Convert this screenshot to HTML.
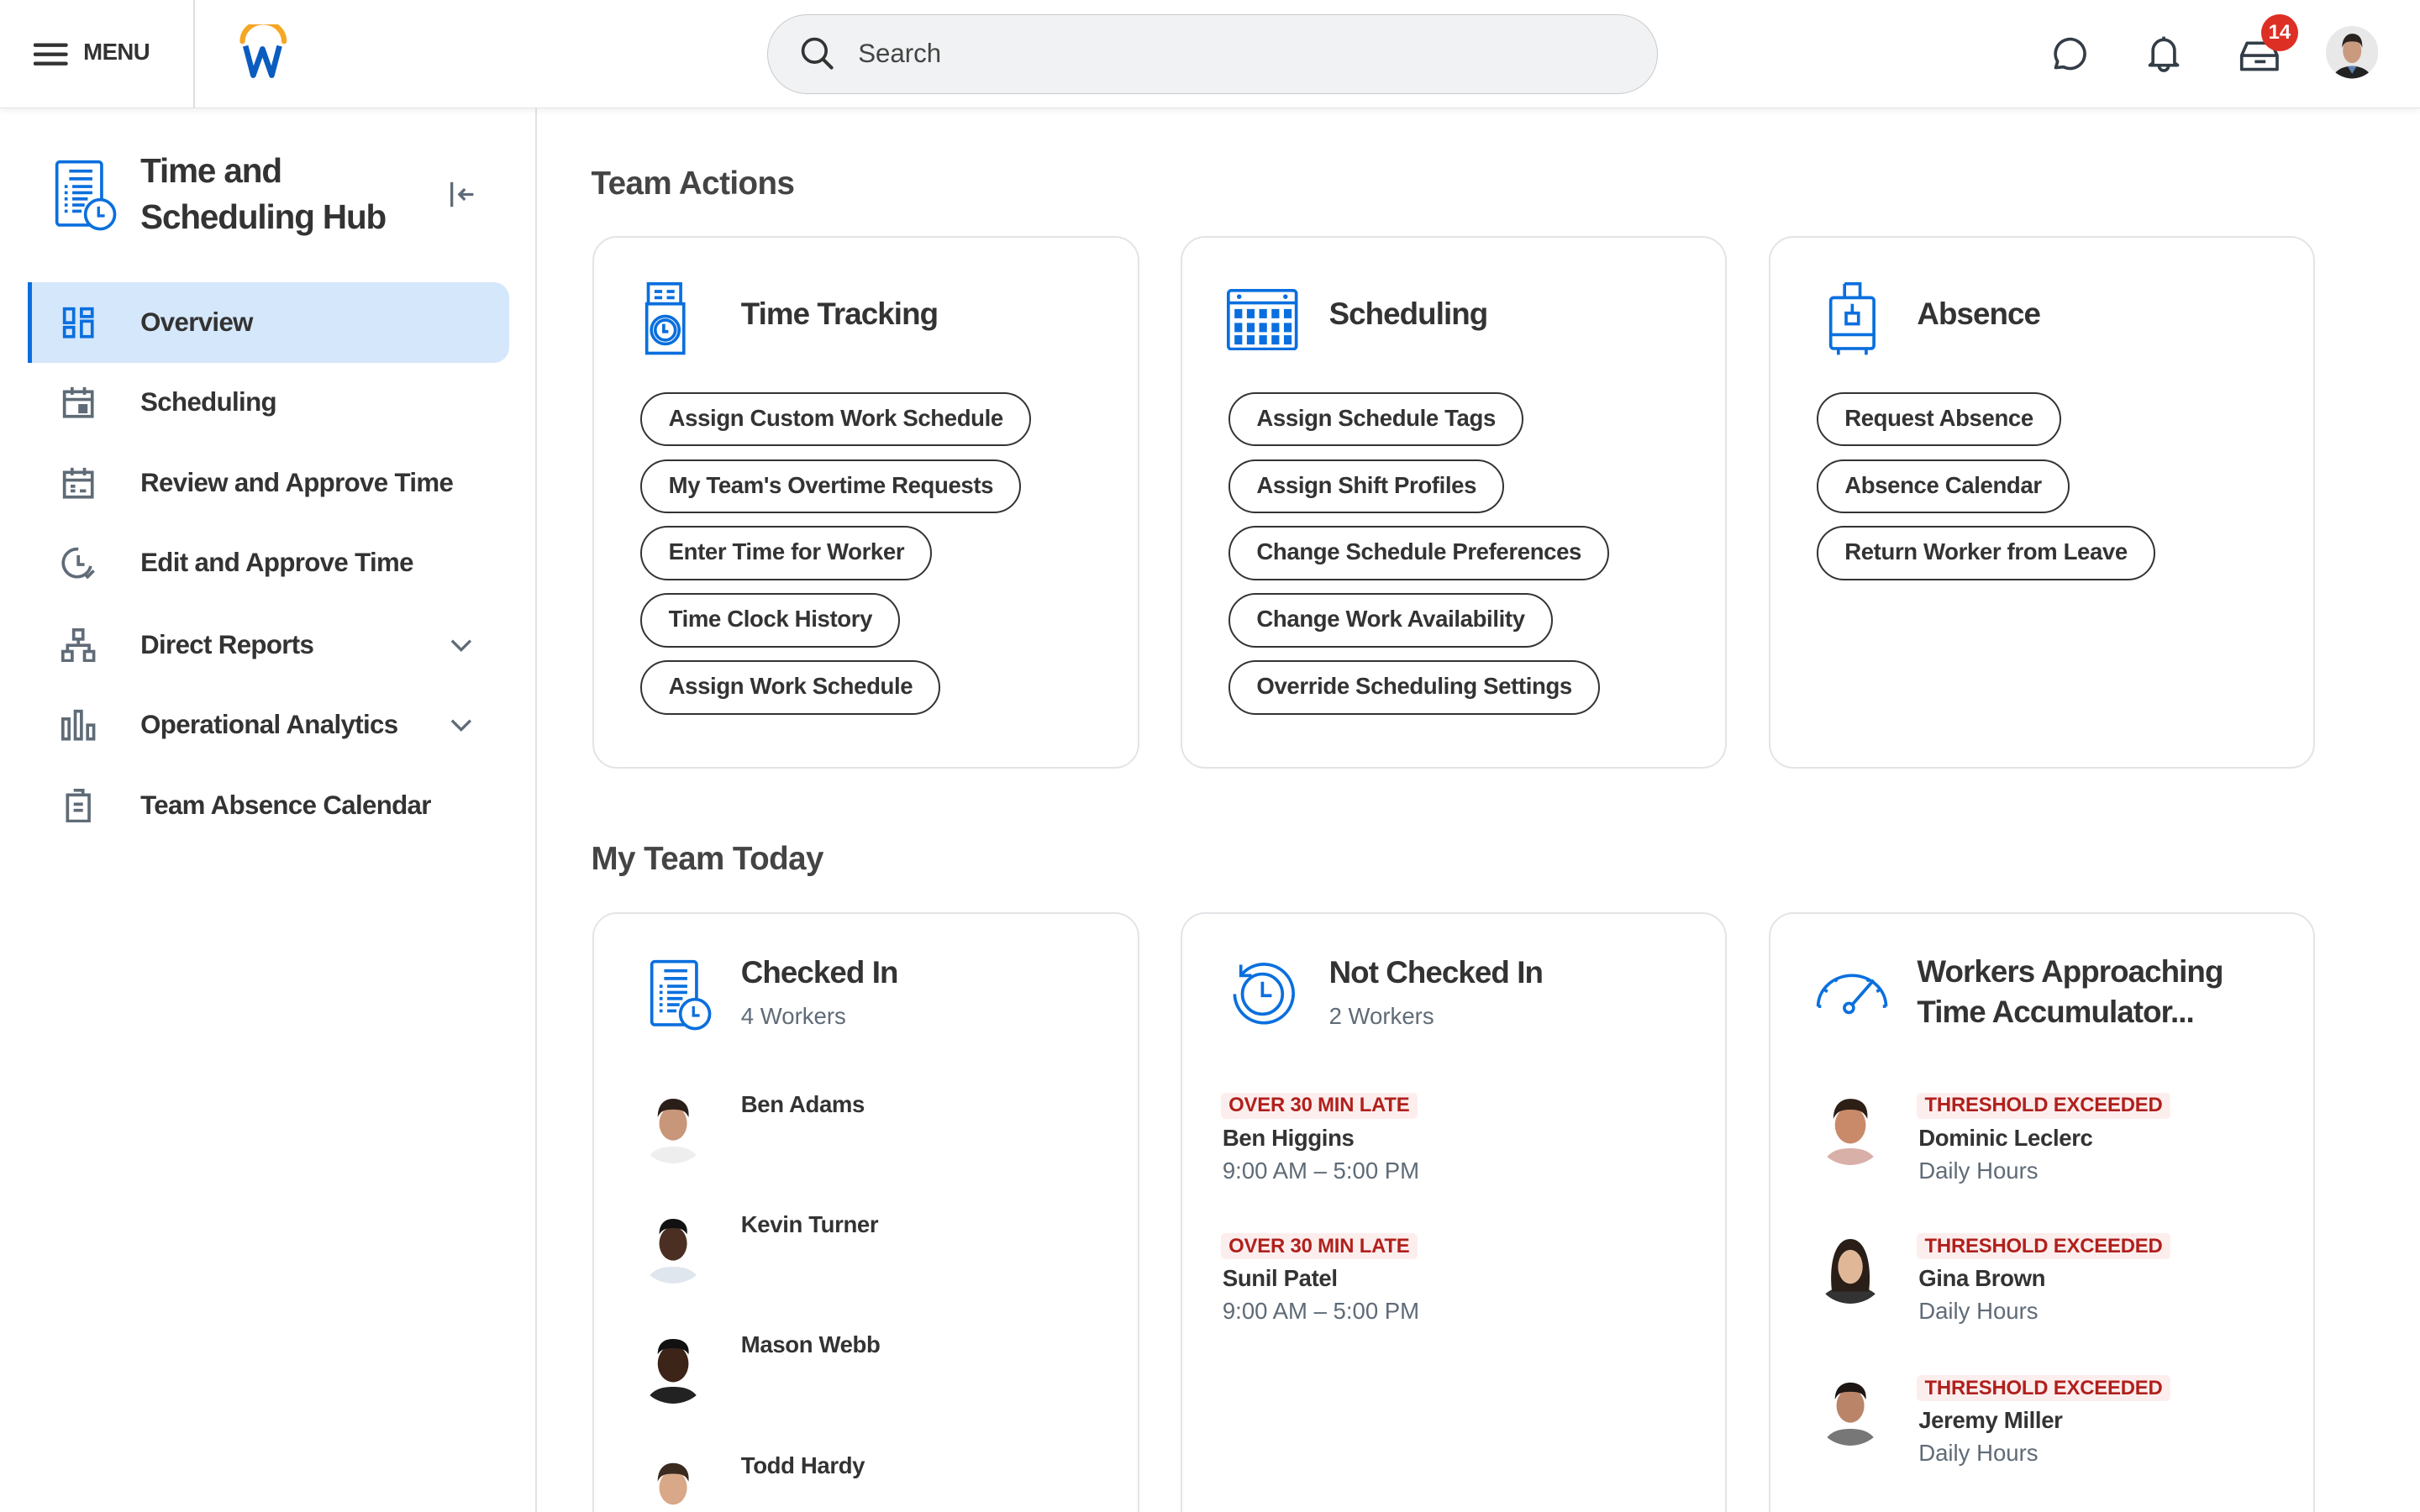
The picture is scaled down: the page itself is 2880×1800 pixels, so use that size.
<!DOCTYPE html>
<html><head><meta charset="utf-8"><style>
*{box-sizing:border-box;margin:0;padding:0}
html,body{width:2880px;height:1800px;overflow:hidden;background:#fff}
#root{zoom:1.836735;width:1568px;height:980px;position:relative;font-family:"Liberation Sans",sans-serif;color:#333;overflow:hidden}
.a{position:absolute}
.hdr{left:0;top:0;width:1568px;height:70px;border-bottom:1px solid #e3e4e6;box-shadow:0 2px 4px rgba(0,0,0,.06);background:#fff;z-index:2}
.side{left:0;top:70px;width:348px;height:910px;border-right:1.5px solid #e2e3e6}
.nav{left:18px;width:312px;height:52px;display:flex;align-items:center;font-size:17px;font-weight:bold;color:#333;letter-spacing:-.35px}
.nav svg{position:absolute;left:22px}
.nav span{position:absolute;left:73px}
.h2{font-size:21px;font-weight:bold;color:#444;letter-spacing:-.3px}
.card{border:1.5px solid #e2e4e7;border-radius:16px;background:#fff}
.ct{font-size:20px;font-weight:bold;color:#333;letter-spacing:-.5px}
.pill{position:absolute;left:30px;height:35px;border:1.6px solid #333;border-radius:18px;padding:0 17px;font-size:15px;font-weight:bold;line-height:32px;white-space:nowrap;color:#333;letter-spacing:-.2px}
.tag{position:absolute;background:#fdeeee;color:#b0201c;font-size:13px;font-weight:bold;padding:1px 5px;border-radius:3px;letter-spacing:-.1px}
.nm{position:absolute;font-size:15px;font-weight:bold;color:#333;letter-spacing:-.2px}
.sub{position:absolute;font-size:15px;color:#5f6b77}
.av{position:absolute;width:48px;height:48px;border-radius:50%;overflow:hidden}
</style></head><body><div id="root">

<div class="a hdr">
 <svg class="a" style="left:22px;top:27px" width="22" height="16" viewBox="0 0 22 16"><path d="M1 2h20M1 8h20M1 14h20" stroke="#333" stroke-width="2.4" stroke-linecap="round"/></svg>
 <div class="a" style="left:54px;top:25px;font-size:15px;font-weight:bold;color:#333;letter-spacing:-.3px">MENU</div>
 <div class="a" style="left:125px;top:0;width:1.5px;height:70px;background:#ddd"></div>
 <svg class="a" style="left:154px;top:16px" width="34" height="36" viewBox="0 0 34 36"><path d="M3 11A13 12 0 0 1 30 11" fill="none" stroke="#f6a623" stroke-width="3.4" stroke-linecap="round"/><path d="M5 14l5 19 6-17 6 17 5-19" fill="none" stroke="#0b5cbf" stroke-width="3.6" stroke-linejoin="round"/></svg>
 <div class="a" style="left:497px;top:9px;width:577px;height:52px;border:1px solid #c7cacd;border-radius:26px;background:#f1f2f3"></div>
 <svg class="a" style="left:518px;top:23px" width="24" height="24" viewBox="0 0 24 24"><circle cx="10" cy="10" r="7.5" fill="none" stroke="#333" stroke-width="2"/><path d="M16 16l5 5" stroke="#333" stroke-width="2.2" stroke-linecap="round"/></svg>
 <div class="a" style="left:556px;top:25px;font-size:17px;color:#444">Search</div>
 <svg class="a" style="left:1329px;top:23px" width="24" height="24" viewBox="0 0 24 24"><path d="M3 21l1.2-4A9.5 9.5 0 1 1 8 20.5z" fill="none" stroke="#333d47" stroke-width="2" stroke-linejoin="round"/></svg>
 <svg class="a" style="left:1390px;top:22px" width="24" height="26" viewBox="0 0 24 26"><path d="M12 2v1.5M5 19V11a7 7 0 0 1 14 0v8l2 1.5H3z" fill="none" stroke="#333d47" stroke-width="2" stroke-linejoin="round"/><path d="M9 21a3 3 0 0 0 6 0" fill="none" stroke="#333d47" stroke-width="2"/></svg>
 <svg class="a" style="left:1451px;top:24px" width="26" height="24" viewBox="0 0 26 24"><path d="M1.5 12L5 4h16l3.5 8v9h-23z M1.5 12h23" fill="none" stroke="#333d47" stroke-width="2" stroke-linejoin="round"/><path d="M10 16h7" stroke="#333d47" stroke-width="2"/></svg>
 <div class="a" style="left:1465px;top:9px;width:24px;height:24px;border-radius:50%;background:#de2f24;color:#fff;font-size:13px;font-weight:bold;text-align:center;line-height:24px">14</div>
 <svg class="a" style="left:1507px;top:17px" width="34" height="34" viewBox="0 0 34 34"><clipPath id="c0"><circle cx="17" cy="17" r="17"/></clipPath><g clip-path="url(#c0)"><rect width="34" height="34" fill="#e8e8e8"/><path d="M4 34c2-6 8-8 13-8s11 2 13 8z" fill="#222"/><path d="M14 26l3 5 3-5z" fill="#5a7fb0"/><ellipse cx="17" cy="16" rx="6" ry="8" fill="#c99a7e"/><path d="M10.5 14c0-6 3-9 6.5-9s7 2 6.5 9c-1-3-2-4-6.5-4s-5 1-6.5 4z" fill="#2a2320"/></g></svg>
</div>

<div class="a side">
 <svg class="a" style="left:35px;top:33px" width="42" height="50" viewBox="0 0 42 50"><rect x="2" y="2" width="29" height="41" rx="2" fill="none" stroke="#0a6fde" stroke-width="2"/><path d="M10 8h15M10 13h15M7 18h2M12 18h13M7 22h2M12 22h13M7 26h2M12 26h10M7 30h2M12 30h8M7 34h2M12 34h6" stroke="#0a6fde" stroke-width="2"/><circle cx="30" cy="36" r="9.5" fill="#fff" stroke="#0a6fde" stroke-width="2"/><path d="M29 31v6h4" fill="none" stroke="#0a6fde" stroke-width="1.8"/></svg>
 <div class="a" style="left:91px;top:26px;font-size:22px;font-weight:bold;line-height:30px;color:#333;letter-spacing:-.6px">Time and<br>Scheduling Hub</div>
 <svg class="a" style="left:291px;top:47px" width="18" height="18" viewBox="0 0 18 18"><path d="M2 1v16" stroke="#5f6b77" stroke-width="1.8"/><path d="M16 9H7M10.5 5.5L7 9l3.5 3.5" fill="none" stroke="#5f6b77" stroke-width="1.8"/></svg>
 <div class="a" style="left:18px;top:113px;width:312px;height:52px;background:#d5e7fb;border-radius:0 10px 10px 0;border-left:3px solid #0a6fde"></div>
 <div class="a nav" style="top:113px"><svg width="22" height="22" viewBox="0 0 22 22"><g fill="none" stroke="#0a6fde" stroke-width="2"><rect x="2" y="2" width="6" height="9"/><rect x="2" y="14" width="6" height="6"/><rect x="13" y="2" width="7" height="5"/><rect x="13" y="10" width="7" height="10"/></g></svg><span>Overview</span></div>
 <div class="a nav" style="top:165px"><svg width="22" height="22" viewBox="0 0 22 22"><g fill="none" stroke="#5f6b77" stroke-width="2"><rect x="2" y="4" width="18" height="16"/><path d="M2 9h18M7 1v5M15 1v5"/><rect x="12" y="13" width="4" height="4" fill="#5f6b77"/></g></svg><span>Scheduling</span></div>
 <div class="a nav" style="top:217px"><svg width="22" height="22" viewBox="0 0 22 22"><g fill="none" stroke="#5f6b77" stroke-width="2"><rect x="2" y="4" width="18" height="16"/><path d="M2 9h18M7 1v5M15 1v5M6 13h3M6 16h3M12 16h4"/></g></svg><span>Review and Approve Time</span></div>
 <div class="a nav" style="top:269px"><svg width="22" height="22" viewBox="0 0 22 22"><g fill="none" stroke="#5f6b77" stroke-width="2"><path d="M19 13A9 9 0 1 1 11 2"/><path d="M11 6v6h4M15 18l2 2 4-4"/></g></svg><span>Edit and Approve Time</span></div>
 <div class="a nav" style="top:322px"><svg width="22" height="22" viewBox="0 0 22 22"><g fill="none" stroke="#5f6b77" stroke-width="2"><rect x="8" y="1" width="6" height="6"/><rect x="1" y="15" width="6" height="6"/><rect x="15" y="15" width="6" height="6"/><path d="M11 7v4M4 15v-4h14v4"/></g></svg><span>Direct Reports</span><svg style="left:274px" width="14" height="10" viewBox="0 0 14 10"><path d="M1 2l6 6 6-6" fill="none" stroke="#5f6b77" stroke-width="1.8"/></svg></div>
 <div class="a nav" style="top:374px"><svg width="22" height="22" viewBox="0 0 22 22"><g fill="none" stroke="#5f6b77" stroke-width="2"><rect x="1" y="7" width="4" height="13"/><rect x="9" y="2" width="4" height="18"/><rect x="17" y="11" width="4" height="9"/></g></svg><span>Operational Analytics</span><svg style="left:274px" width="14" height="10" viewBox="0 0 14 10"><path d="M1 2l6 6 6-6" fill="none" stroke="#5f6b77" stroke-width="1.8"/></svg></div>
 <div class="a nav" style="top:426px"><svg width="22" height="22" viewBox="0 0 22 22"><g fill="none" stroke="#5f6b77" stroke-width="2"><rect x="4" y="4" width="14" height="17"/><path d="M8 1h6v3M8 10h6M8 14h6"/></g></svg><span>Team Absence Calendar</span></div>
</div>

<div class="a h2" style="left:383px;top:107px">Team Actions</div>

<div class="a card" style="left:384px;top:153px;width:354px;height:345px">
 <svg class="a" style="left:32px;top:29px" width="42" height="48" viewBox="0 0 42 48"><g fill="none" stroke="#0a6fde" stroke-width="2"><rect x="3" y="1" width="21" height="13"/><path d="M7 6h5M15 6h5M7 10h5M15 10h5"/><rect x="2" y="14" width="24" height="32"/><circle cx="14" cy="31" r="9"/><circle cx="14" cy="31" r="6.5"/><path d="M13 27v5h3"/></g></svg>
 <div class="a ct" style="left:95px;top:38px">Time Tracking</div>
 <div class="pill" style="top:100px">Assign Custom Work Schedule</div>
 <div class="pill" style="top:143.5px">My Team's Overtime Requests</div>
 <div class="pill" style="top:187px">Enter Time for Worker</div>
 <div class="pill" style="top:230.5px">Time Clock History</div>
 <div class="pill" style="top:274px">Assign Work Schedule</div>
</div>
<div class="a card" style="left:765px;top:153px;width:354px;height:345px">
 <svg class="a" style="left:29px;top:33px" width="46" height="40" viewBox="0 0 46 40"><g fill="none" stroke="#0a6fde" stroke-width="2"><rect x="1" y="1" width="44" height="38" rx="2"/><path d="M1 9h44"/></g><g fill="#0a6fde"><circle cx="8" cy="5" r="1.5"/><circle cx="38" cy="5" r="1.5"/><rect x="5" y="13" width="5" height="6"/><rect x="13" y="13" width="5" height="6"/><rect x="21" y="13" width="5" height="6"/><rect x="29" y="13" width="5" height="6"/><rect x="37" y="13" width="5" height="6"/><rect x="5" y="22" width="5" height="6"/><rect x="13" y="22" width="5" height="6"/><rect x="21" y="22" width="5" height="6"/><rect x="29" y="22" width="5" height="6"/><rect x="37" y="22" width="5" height="6"/><rect x="5" y="30" width="5" height="6"/><rect x="13" y="30" width="5" height="6"/><rect x="21" y="30" width="5" height="6"/><rect x="29" y="30" width="5" height="6"/><rect x="37" y="30" width="5" height="6"/></g></svg>
 <div class="a ct" style="left:95px;top:38px">Scheduling</div>
 <div class="pill" style="top:100px">Assign Schedule Tags</div>
 <div class="pill" style="top:143.5px">Assign Shift Profiles</div>
 <div class="pill" style="top:187px">Change Schedule Preferences</div>
 <div class="pill" style="top:230.5px">Change Work Availability</div>
 <div class="pill" style="top:274px">Override Scheduling Settings</div>
</div>
<div class="a card" style="left:1146px;top:153px;width:354px;height:345px">
 <svg class="a" style="left:37px;top:29px" width="32" height="48" viewBox="0 0 32 48"><g fill="none" stroke="#0a6fde" stroke-width="2"><path d="M11 1h10v9M11 1v9"/><rect x="2" y="10" width="28" height="33" rx="2"/><path d="M16 14v6"/><rect x="12" y="20" width="8" height="7"/><path d="M2 34h28M7 43v4M25 43v4"/></g></svg>
 <div class="a ct" style="left:95px;top:38px">Absence</div>
 <div class="pill" style="top:100px">Request Absence</div>
 <div class="pill" style="top:143.5px">Absence Calendar</div>
 <div class="pill" style="top:187px">Return Worker from Leave</div>
</div>

<div class="a h2" style="left:383px;top:545px">My Team Today</div>

<div class="a card" style="left:384px;top:591px;width:354px;height:420px">
 <svg class="a" style="left:35px;top:29px" width="42" height="50" viewBox="0 0 42 50"><rect x="2" y="2" width="29" height="41" rx="2" fill="none" stroke="#0a6fde" stroke-width="2"/><path d="M10 8h15M10 13h15M7 18h2M12 18h13M7 22h2M12 22h13M7 26h2M12 26h10M7 30h2M12 30h8M7 34h2M12 34h6" stroke="#0a6fde" stroke-width="2"/><circle cx="30" cy="36" r="9.5" fill="#fff" stroke="#0a6fde" stroke-width="2"/><path d="M29 31v6h4" fill="none" stroke="#0a6fde" stroke-width="1.8"/></svg>
 <div class="a ct" style="left:95px;top:27px">Checked In</div>
 <div class="sub" style="left:95px;top:58px">4 Workers</div>
 <div class="nm" style="left:95px;top:115px">Ben Adams</div>
 <div class="nm" style="left:95px;top:193px">Kevin Turner</div>
 <div class="nm" style="left:95px;top:271px">Mason Webb</div>
 <div class="nm" style="left:95px;top:349px">Todd Hardy</div>
</div>
<div class="a card" style="left:765px;top:591px;width:354px;height:420px">
 <svg class="a" style="left:30px;top:30px" width="44" height="44" viewBox="0 0 44 44"><g fill="none" stroke="#0a6fde" stroke-width="2"><path d="M8 10A19 19 0 1 1 4 22"/><path d="M8 3v7h7"/><circle cx="22" cy="22" r="13"/><path d="M22 14v9h6"/></g></svg>
 <div class="a ct" style="left:95px;top:27px">Not Checked In</div>
 <div class="sub" style="left:95px;top:58px">2 Workers</div>
 <div class="tag" style="left:25px;top:116px">OVER 30 MIN LATE</div>
 <div class="nm" style="left:26px;top:137px">Ben Higgins</div>
 <div class="sub" style="left:26px;top:158px">9:00 AM – 5:00 PM</div>
 <div class="tag" style="left:25px;top:207px">OVER 30 MIN LATE</div>
 <div class="nm" style="left:26px;top:228px">Sunil Patel</div>
 <div class="sub" style="left:26px;top:249px">9:00 AM – 5:00 PM</div>
</div>
<div class="a card" style="left:1146px;top:591px;width:354px;height:420px">
 <svg class="a" style="left:29px;top:36px" width="48" height="30" viewBox="0 0 48 30"><g fill="none" stroke="#0a6fde" stroke-width="2"><path d="M2 24A22 20 0 0 1 46 24M2 24h2M44 24h2M6 13l2 1.5M13 6l1 2M24 3v2M35 6l-1 2M42 13l-2 1.5"/><circle cx="22" cy="25" r="3"/><path d="M24 23L38 7"/></g></svg>
 <div class="a ct" style="left:95px;top:25px;line-height:26px">Workers Approaching<br>Time Accumulator...</div>
 <div class="tag" style="left:95px;top:116px">THRESHOLD EXCEEDED</div>
 <div class="nm" style="left:96px;top:137px">Dominic Leclerc</div>
 <div class="sub" style="left:96px;top:158px">Daily Hours</div>
 <div class="tag" style="left:95px;top:207px">THRESHOLD EXCEEDED</div>
 <div class="nm" style="left:96px;top:228px">Gina Brown</div>
 <div class="sub" style="left:96px;top:249px">Daily Hours</div>
 <div class="tag" style="left:95px;top:299px">THRESHOLD EXCEEDED</div>
 <div class="nm" style="left:96px;top:320px">Jeremy Miller</div>
 <div class="sub" style="left:96px;top:341px">Daily Hours</div>
</div>

<svg width="0" height="0" style="position:absolute"><defs><clipPath id="cc"><circle cx="24" cy="24" r="24"/></clipPath></defs></svg>
<svg class="av" style="left:412px;top:706px" viewBox="0 0 48 48"><g clip-path="url(#cc)"><rect width="48" height="48" fill="#fff"/><path d="M6 48c3-9 10-11 18-11s15 2 18 11z" fill="#eee"/><ellipse cx="24" cy="22" rx="9" ry="11" fill="#c89678"/><path d="M14 18c0-9 5-12 10-12s11 3 10 12c-2-4-4-5-10-5s-8 1-10 5z" fill="#2a1e18"/></g></svg>
<svg class="av" style="left:412px;top:784px" viewBox="0 0 48 48"><g clip-path="url(#cc)"><rect width="48" height="48" fill="#fff"/><path d="M6 48c3-9 10-11 18-11s15 2 18 11z" fill="#dfe6ee"/><ellipse cx="24" cy="22" rx="9" ry="11" fill="#4a2f22"/><path d="M15 16c0-7 4-10 9-10s10 3 9 10c-2-3-4-4-9-4s-7 1-9 4z" fill="#111"/></g></svg>
<svg class="av" style="left:412px;top:862px" viewBox="0 0 48 48"><g clip-path="url(#cc)"><rect width="48" height="48" fill="#fff"/><path d="M6 48c3-9 10-11 18-11s15 2 18 11z" fill="#222"/><ellipse cx="24" cy="22" rx="10" ry="12" fill="#3d2418"/><path d="M14 16c0-7 4-10 10-10s11 3 10 10c-2-3-4-4-10-4s-8 1-10 4z" fill="#111"/></g></svg>
<svg class="av" style="left:412px;top:940px" viewBox="0 0 48 48"><g clip-path="url(#cc)"><rect width="48" height="48" fill="#fff"/><ellipse cx="24" cy="24" rx="9" ry="11" fill="#d9a888"/><path d="M14 20c0-9 5-12 10-12s11 3 10 12c-2-4-4-5-10-5s-8 1-10 5z" fill="#3a2a20"/></g></svg>
<svg class="av" style="left:1175px;top:707px" viewBox="0 0 48 48"><g clip-path="url(#cc)"><rect width="48" height="48" fill="#fff"/><path d="M6 48c3-9 10-11 18-11s15 2 18 11z" fill="#d9b0a8"/><ellipse cx="24" cy="22" rx="10" ry="12" fill="#c98a6a"/><path d="M13 18c0-9 5-13 11-13s12 3 11 13c-2-4-4-6-11-6s-9 2-11 6z" fill="#2d1e16"/></g></svg>
<svg class="av" style="left:1175px;top:797px" viewBox="0 0 48 48"><g clip-path="url(#cc)"><rect width="48" height="48" fill="#fff"/><path d="M4 48c3-9 10-11 20-11s17 2 20 11z" fill="#333"/><path d="M12 40c-2-18 2-34 12-34s14 16 12 34z" fill="#2a1e18"/><ellipse cx="24" cy="24" rx="8" ry="11" fill="#e0b898"/></g></svg>
<svg class="av" style="left:1175px;top:889px" viewBox="0 0 48 48"><g clip-path="url(#cc)"><rect width="48" height="48" fill="#fff"/><path d="M6 48c3-9 10-11 18-11s15 2 18 11z" fill="#777"/><ellipse cx="24" cy="22" rx="9" ry="11" fill="#b98468"/><path d="M14 18c0-8 5-11 10-11s11 3 10 11c-2-4-4-5-10-5s-8 1-10 5z" fill="#1e1612"/></g></svg>

</div></body></html>
